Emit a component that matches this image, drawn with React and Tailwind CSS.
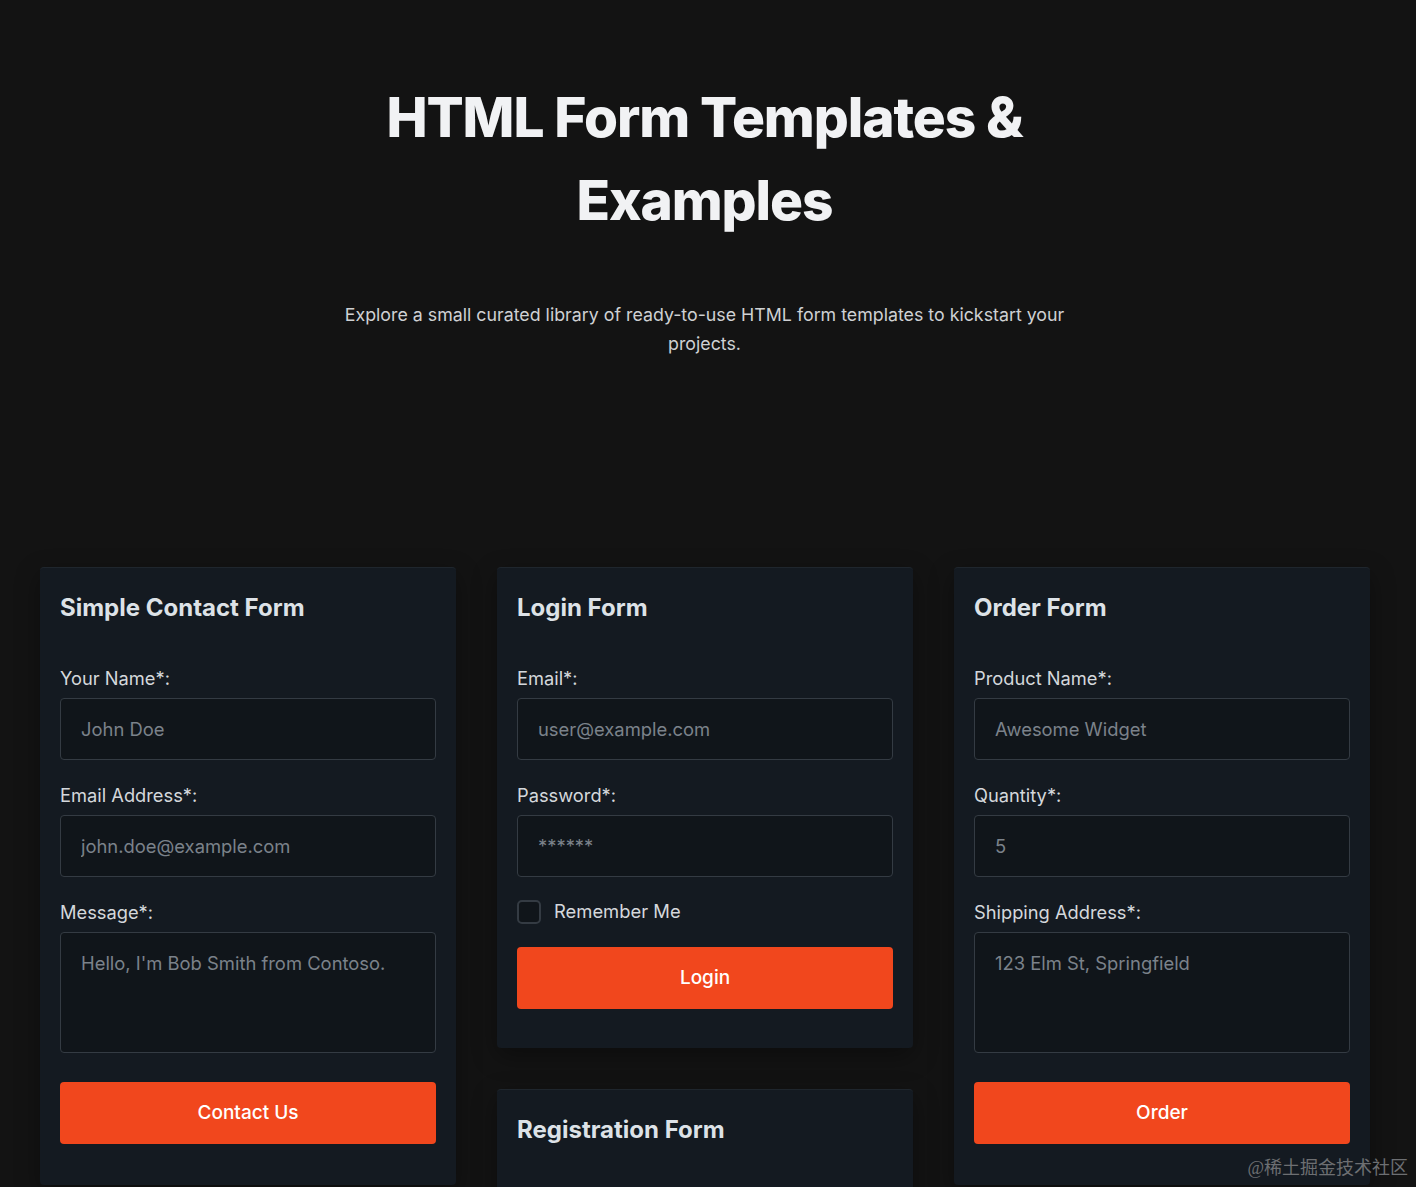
import { useState } from "react";

const font = { fontFamily: "Inter, 'Noto Sans', sans-serif" };

function Field({ label, placeholder, type = "text", textarea = false }) {
  return (
    <div className="flex flex-col">
      <label className="text-[18.3px] leading-[26px] text-[#d4d8dc] mb-[7px]">{label}</label>
      {textarea ? (
        <textarea
          placeholder={placeholder}
          className="h-[121px] resize-none rounded-[4px] border border-[#343b43] bg-[#10151a] px-5 py-[17px] text-[18.4px] leading-[26px] text-[#d4d8dc] placeholder:text-[#7b828a] focus:outline-none"
        />
      ) : (
        <input
          type={type}
          placeholder={placeholder}
          className="h-[62px] rounded-[4px] border border-[#343b43] bg-[#10151a] px-5 text-[18.4px] text-[#d4d8dc] placeholder:text-[#7b828a] focus:outline-none"
        />
      )}
    </div>
  );
}

function Card({ title, children, className = "" }) {
  return (
    <div
      className={
        "rounded-[4px] border-t border-[#1f262d] bg-[#141a21] px-5 pt-6 shadow-[0_8px_24px_rgba(0,0,0,0.35)] " +
        className
      }
    >
      <h2 className="text-[24px] leading-[32px] font-bold text-[#dde2e7]">{title}</h2>
      {children}
    </div>
  );
}

function SubmitButton({ children }) {
  return (
    <button className="h-[62px] w-full rounded-[4px] bg-[#f1471d] text-[19px] font-medium text-white">
      {children}
    </button>
  );
}

export default function App() {
  const [remember, setRemember] = useState(false);

  return (
    <div className="relative h-[1187px] overflow-hidden bg-[#131313]" style={font}>
      <div className="w-[1409px]">
        <header className="flex flex-col items-center pt-[76px]">
          <h1 className="text-center text-[55px] leading-[83px] font-extrabold tracking-[-0.02em] text-[#f1f2f4] w-[680px]">
            HTML Form Templates &amp; Examples
          </h1>
          <p className="mt-[58px] max-w-[740px] text-center text-[17.8px] leading-[29px] text-[#cfd1d3]">
            Explore a small curated library of ready-to-use HTML form templates to kickstart your projects.
          </p>
        </header>

        <main className="ml-10 mt-[209px] grid w-[1330px] grid-cols-3 gap-[41px] items-start">
          <Card title="Simple Contact Form" className="pb-[41px]">
            <div className="mt-[41px] flex flex-col gap-[22px]">
              <Field label="Your Name*:" placeholder="John Doe" />
              <Field label="Email Address*:" placeholder="john.doe@example.com" type="email" />
              <Field label="Message*:" placeholder="Hello, I'm Bob Smith from Contoso." textarea />
            </div>
            <div className="mt-[29px]">
              <SubmitButton>Contact Us</SubmitButton>
            </div>
          </Card>

          <div className="flex flex-col gap-[41px]">
            <Card title="Login Form" className="pb-[39px]">
              <div className="mt-[41px] flex flex-col gap-[22px]">
                <Field label="Email*:" placeholder="user@example.com" type="email" />
                <Field label="Password*:" placeholder="******" />
              </div>
              <label className="mt-[21px] flex h-[28px] items-center gap-[13px] text-[18.4px] text-[#d4d8dc]">
                <span
                  onClick={() => setRemember(!remember)}
                  className="h-6 w-6 rounded-[5px] border-2 border-[#343b43] bg-[#10151a]"
                />
                Remember Me
              </label>
              <div className="mt-[21px]">
                <SubmitButton>Login</SubmitButton>
              </div>
            </Card>
            <Card title="Registration Form" className="h-[200px]" />
          </div>

          <Card title="Order Form" className="pb-[41px]">
            <div className="mt-[41px] flex flex-col gap-[22px]">
              <Field label="Product Name*:" placeholder="Awesome Widget" />
              <Field label="Quantity*:" placeholder="5" />
              <Field label="Shipping Address*:" placeholder="123 Elm St, Springfield" textarea />
            </div>
            <div className="mt-[29px]">
              <SubmitButton>Order</SubmitButton>
            </div>
          </Card>
        </main>
      </div>

      <div
        className="absolute right-[8px] top-[1155px] text-[18px] text-[#6d6f72]"
        style={{ fontFamily: "'Liberation Serif', 'Noto Sans CJK SC', serif" }}
      >
        @稀土掘金技术社区
      </div>
    </div>
  );
}
